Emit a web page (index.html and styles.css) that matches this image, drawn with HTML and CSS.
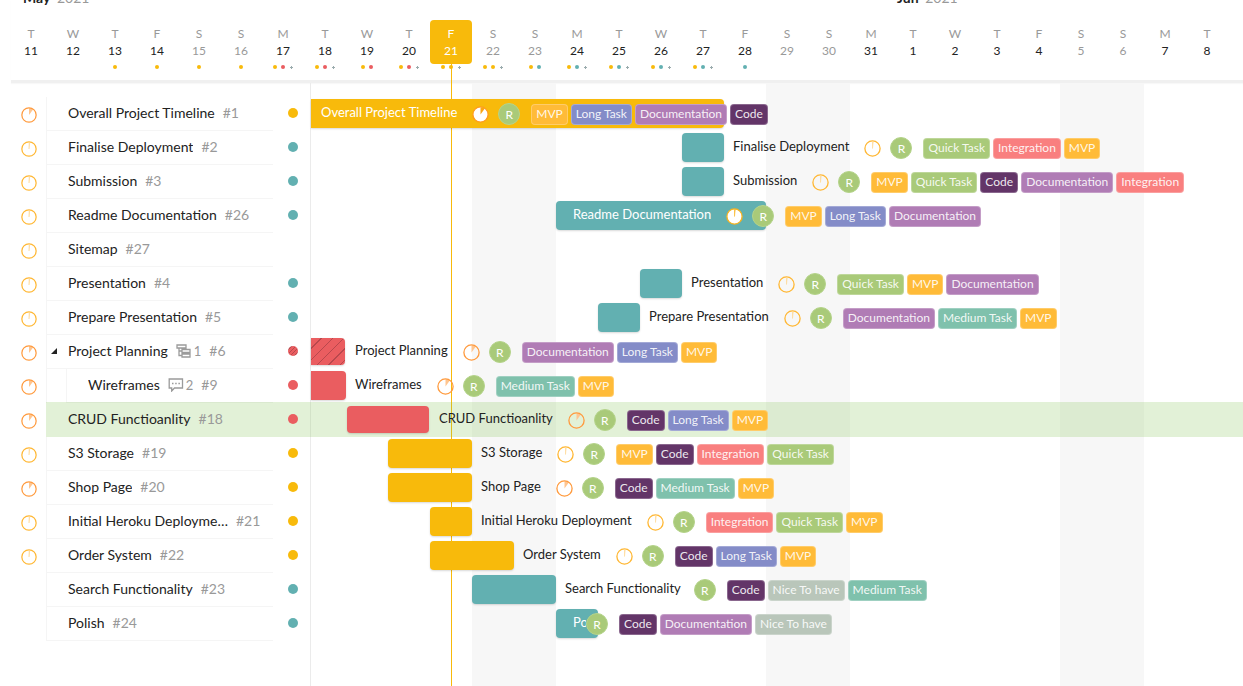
FILE: index.html
```html
<!DOCTYPE html>
<html lang="en">
<head>
<meta charset="utf-8">
<title>Project timeline</title>
<link rel="stylesheet" href="styles.css">
</head>
<body>
<svg class="sprite" aria-hidden="true">
  <symbol id="p0" viewBox="0 0 17 17"><circle cx="8.5" cy="8.5" r="7.6" fill="none" stroke="#ffb733" stroke-width="1.3"/><path d="M8.5 8.5V1.5h.8z" fill="#ffe0a6" stroke="#ffd58a" stroke-width=".5"/></symbol>
  <symbol id="p10" viewBox="0 0 17 17"><path d="M8.5 8.5V1.2a7.3 7.3 0 0 1 4.300 1.400z" fill="#ffc58f"/><circle cx="8.5" cy="8.5" r="7.6" fill="none" stroke="#ff9a3d" stroke-width="1.3"/></symbol>
  <symbol id="f0" viewBox="0 0 17 17"><circle cx="8.5" cy="8.5" r="7.6" fill="#fff" stroke="#f9b21c" stroke-width="1.3"/><path d="M8.5 8.5V1.5h.8z" fill="#f9b21c" stroke="#f9b21c" stroke-width=".5"/></symbol>
  <symbol id="f10" viewBox="0 0 17 17"><circle cx="8.5" cy="8.5" r="7.6" fill="#fff" stroke="#ff9a1f" stroke-width="1.3"/><path d="M8.5 8.5V1.2a7.3 7.3 0 0 1 4.300 1.400z" fill="#fba614"/></symbol>
  <symbol id="subtasks" viewBox="0 0 16 14"><path d="M1 1h9v3H1zM6 5.500h8v3H6zM6 10h8v3H6zM3 4v7.500h3M3 7h3" fill="none" stroke="#9b9b9b" stroke-width="1.3"/></symbol>
  <symbol id="comments" viewBox="0 0 16 14"><path d="M1.200 1h13.300v9H6.500L3.700 13v-3H1.200z" fill="none" stroke="#9b9b9b" stroke-width="1.3"/><path d="M4 5.500h1.500M7.200 5.500h1.500M10.400 5.500h1.500" stroke="#9b9b9b" stroke-width="1.300"/></symbol>
</svg>

<header class="calendar">
  <div class="months">
    <div class="month may"><b>May</b> 2021</div>
    <div class="month jun"><b>Jun</b> 2021</div>
  </div>
  <ol class="days">
    <li class="day"><span>T</span><b>11</b></li>
    <li class="day"><span>W</span><b>12</b></li>
    <li class="day"><span>T</span><b>13</b><div class="load"><i class="yellow"></i></div></li>
    <li class="day"><span>F</span><b>14</b><div class="load"><i class="yellow"></i></div></li>
    <li class="day off"><span>S</span><b>15</b><div class="load"><i class="yellow"></i></div></li>
    <li class="day off"><span>S</span><b>16</b><div class="load"><i class="yellow"></i></div></li>
    <li class="day"><span>M</span><b>17</b><div class="load"><i class="yellow"></i><i class="red"></i><i class="more"></i></div></li>
    <li class="day"><span>T</span><b>18</b><div class="load"><i class="yellow"></i><i class="red"></i><i class="more"></i></div></li>
    <li class="day"><span>W</span><b>19</b><div class="load"><i class="yellow"></i><i class="red"></i></div></li>
    <li class="day"><span>T</span><b>20</b><div class="load"><i class="yellow"></i><i class="red"></i><i class="more"></i></div></li>
    <li class="day today"><span>F</span><b>21</b><div class="load"><i class="yellow"></i><i class="yellow"></i><i class="more"></i></div></li>
    <li class="day off"><span>S</span><b>22</b><div class="load"><i class="yellow"></i><i class="yellow"></i><i class="more"></i></div></li>
    <li class="day off"><span>S</span><b>23</b><div class="load"><i class="yellow"></i><i class="teal"></i></div></li>
    <li class="day"><span>M</span><b>24</b><div class="load"><i class="yellow"></i><i class="teal"></i><i class="more"></i></div></li>
    <li class="day"><span>T</span><b>25</b><div class="load"><i class="yellow"></i><i class="teal"></i><i class="more"></i></div></li>
    <li class="day"><span>W</span><b>26</b><div class="load"><i class="yellow"></i><i class="teal"></i><i class="more"></i></div></li>
    <li class="day"><span>T</span><b>27</b><div class="load"><i class="yellow"></i><i class="teal"></i><i class="more"></i></div></li>
    <li class="day"><span>F</span><b>28</b><div class="load"><i class="teal"></i></div></li>
    <li class="day off"><span>S</span><b>29</b></li>
    <li class="day off"><span>S</span><b>30</b></li>
    <li class="day"><span>M</span><b>31</b></li>
    <li class="day"><span>T</span><b>1</b></li>
    <li class="day"><span>W</span><b>2</b></li>
    <li class="day"><span>T</span><b>3</b></li>
    <li class="day"><span>F</span><b>4</b></li>
    <li class="day off"><span>S</span><b>5</b></li>
    <li class="day off"><span>S</span><b>6</b></li>
    <li class="day"><span>M</span><b>7</b></li>
    <li class="day"><span>T</span><b>8</b></li>
  </ol>
</header>

<main class="board">
  <div class="backdrop">
    <div class="weekend first"></div>
    <div class="weekend second"></div>
    <div class="weekend third"></div>
    <div class="now"></div>
  </div>

  <div class="row">
    <div class="status"><svg class="pie"><use href="#p10"/></svg></div>
    <div class="line">
      <div class="task"><span class="name">Overall Project Timeline</span><span class="id">#1</span></div>
      <div class="flag"><i class="yellow"></i></div>
      <div class="track" style="--start:1;--end:11"><div class="bar yellow cut"></div>
        <div class="meta inside pinned"><span class="name">Overall Project Timeline</span><svg class="pie"><use href="#f10"/></svg><span class="avatar">R</span><span class="tag mvp">MVP</span><span class="tag long">Long Task</span><span class="tag doc">Documentation</span><span class="tag code">Code</span></div></div>
    </div>
  </div>

  <div class="row">
    <div class="status"><svg class="pie"><use href="#p0"/></svg></div>
    <div class="line">
      <div class="task"><span class="name">Finalise Deployment</span><span class="id">#2</span></div>
      <div class="flag"><i class="teal"></i></div>
      <div class="track" style="--start:10;--end:11"><div class="bar teal"></div>
        <div class="meta"><span class="name">Finalise Deployment</span><svg class="pie"><use href="#p0"/></svg><span class="avatar">R</span><span class="tag quick">Quick Task</span><span class="tag integration">Integration</span><span class="tag mvp">MVP</span></div></div>
    </div>
  </div>

  <div class="row">
    <div class="status"><svg class="pie"><use href="#p0"/></svg></div>
    <div class="line">
      <div class="task"><span class="name">Submission</span><span class="id">#3</span></div>
      <div class="flag"><i class="teal"></i></div>
      <div class="track" style="--start:10;--end:11"><div class="bar teal"></div>
        <div class="meta"><span class="name">Submission</span><svg class="pie"><use href="#p0"/></svg><span class="avatar">R</span><span class="tag mvp">MVP</span><span class="tag quick">Quick Task</span><span class="tag code">Code</span><span class="tag doc">Documentation</span><span class="tag integration">Integration</span></div></div>
    </div>
  </div>

  <div class="row">
    <div class="status"><svg class="pie"><use href="#p0"/></svg></div>
    <div class="line">
      <div class="task"><span class="name">Readme Documentation</span><span class="id">#26</span></div>
      <div class="flag"><i class="teal"></i></div>
      <div class="track" style="--start:7;--end:12"><div class="bar teal"></div>
        <div class="meta inside"><span class="name">Readme Documentation</span><svg class="pie"><use href="#f0"/></svg><span class="avatar">R</span><span class="tag mvp">MVP</span><span class="tag long">Long Task</span><span class="tag doc">Documentation</span></div></div>
    </div>
  </div>

  <div class="row">
    <div class="status"><svg class="pie"><use href="#p0"/></svg></div>
    <div class="line">
      <div class="task"><span class="name">Sitemap</span><span class="id">#27</span></div>
      <div class="flag"></div>
      <div class="track"></div>
    </div>
  </div>

  <div class="row">
    <div class="status"><svg class="pie"><use href="#p0"/></svg></div>
    <div class="line">
      <div class="task"><span class="name">Presentation</span><span class="id">#4</span></div>
      <div class="flag"><i class="teal"></i></div>
      <div class="track" style="--start:9;--end:10"><div class="bar teal"></div>
        <div class="meta"><span class="name">Presentation</span><svg class="pie"><use href="#p0"/></svg><span class="avatar">R</span><span class="tag quick">Quick Task</span><span class="tag mvp">MVP</span><span class="tag doc">Documentation</span></div></div>
    </div>
  </div>

  <div class="row">
    <div class="status"><svg class="pie"><use href="#p0"/></svg></div>
    <div class="line">
      <div class="task"><span class="name">Prepare Presentation</span><span class="id">#5</span></div>
      <div class="flag"><i class="teal"></i></div>
      <div class="track" style="--start:8;--end:9"><div class="bar teal"></div>
        <div class="meta"><span class="name">Prepare Presentation</span><svg class="pie"><use href="#p0"/></svg><span class="avatar">R</span><span class="tag doc">Documentation</span><span class="tag medium">Medium Task</span><span class="tag mvp">MVP</span></div></div>
    </div>
  </div>

  <div class="row">
    <div class="status"><svg class="pie"><use href="#p10"/></svg></div>
    <div class="line">
      <div class="task parent"><button class="toggle" aria-label="Collapse Project Planning"><svg viewBox="0 0 6 6"><path d="M6 0v6H0z" fill="#222"/></svg></button><span class="name">Project Planning</span><svg class="glyph"><use href="#subtasks"/></svg><span class="count">1</span><span class="id">#6</span></div>
      <div class="flag"><i class="red hatch"></i></div>
      <div class="track" style="--start:1;--end:2"><div class="bar red hatch cut inset"></div>
        <div class="meta"><span class="name">Project Planning</span><svg class="pie"><use href="#p10"/></svg><span class="avatar">R</span><span class="tag doc">Documentation</span><span class="tag long">Long Task</span><span class="tag mvp">MVP</span></div></div>
    </div>
  </div>

  <div class="row">
    <div class="status"><svg class="pie"><use href="#p10"/></svg></div>
    <div class="line">
      <div class="indent"></div>
      <div class="task child"><span class="name">Wireframes</span><svg class="glyph"><use href="#comments"/></svg><span class="count">2</span><span class="id">#9</span></div>
      <div class="flag"><i class="red"></i></div>
      <div class="track" style="--start:1;--end:2"><div class="bar red cut"></div>
        <div class="meta"><span class="name">Wireframes</span><svg class="pie"><use href="#p10"/></svg><span class="avatar">R</span><span class="tag medium">Medium Task</span><span class="tag mvp">MVP</span></div></div>
    </div>
  </div>

  <div class="row selected">
    <div class="status"><svg class="pie"><use href="#p10"/></svg></div>
    <div class="line">
      <div class="task"><span class="name">CRUD Functioanlity</span><span class="id">#18</span></div>
      <div class="flag"><i class="red"></i></div>
      <div class="track" style="--start:2;--end:4"><div class="bar red inset"></div>
        <div class="meta"><span class="name">CRUD Functioanlity</span><svg class="pie"><use href="#p10"/></svg><span class="avatar">R</span><span class="tag code">Code</span><span class="tag long">Long Task</span><span class="tag mvp">MVP</span></div></div>
    </div>
  </div>

  <div class="row">
    <div class="status"><svg class="pie"><use href="#p0"/></svg></div>
    <div class="line">
      <div class="task"><span class="name">S3 Storage</span><span class="id">#19</span></div>
      <div class="flag"><i class="yellow"></i></div>
      <div class="track" style="--start:3;--end:5"><div class="bar yellow"></div>
        <div class="meta"><span class="name">S3 Storage</span><svg class="pie"><use href="#p0"/></svg><span class="avatar">R</span><span class="tag mvp">MVP</span><span class="tag code">Code</span><span class="tag integration">Integration</span><span class="tag quick">Quick Task</span></div></div>
    </div>
  </div>

  <div class="row">
    <div class="status"><svg class="pie"><use href="#p10"/></svg></div>
    <div class="line">
      <div class="task"><span class="name">Shop Page</span><span class="id">#20</span></div>
      <div class="flag"><i class="yellow"></i></div>
      <div class="track" style="--start:3;--end:5"><div class="bar yellow"></div>
        <div class="meta"><span class="name">Shop Page</span><svg class="pie"><use href="#p10"/></svg><span class="avatar">R</span><span class="tag code">Code</span><span class="tag medium">Medium Task</span><span class="tag mvp">MVP</span></div></div>
    </div>
  </div>

  <div class="row">
    <div class="status"><svg class="pie"><use href="#p0"/></svg></div>
    <div class="line">
      <div class="task"><span class="name">Initial Heroku Deployment</span><span class="id">#21</span></div>
      <div class="flag"><i class="yellow"></i></div>
      <div class="track" style="--start:4;--end:5"><div class="bar yellow"></div>
        <div class="meta"><span class="name">Initial Heroku Deployment</span><svg class="pie"><use href="#p0"/></svg><span class="avatar">R</span><span class="tag integration">Integration</span><span class="tag quick">Quick Task</span><span class="tag mvp">MVP</span></div></div>
    </div>
  </div>

  <div class="row">
    <div class="status"><svg class="pie"><use href="#p0"/></svg></div>
    <div class="line">
      <div class="task"><span class="name">Order System</span><span class="id">#22</span></div>
      <div class="flag"><i class="yellow"></i></div>
      <div class="track" style="--start:4;--end:6"><div class="bar yellow"></div>
        <div class="meta"><span class="name">Order System</span><svg class="pie"><use href="#p0"/></svg><span class="avatar">R</span><span class="tag code">Code</span><span class="tag long">Long Task</span><span class="tag mvp">MVP</span></div></div>
    </div>
  </div>

  <div class="row">
    <div class="status"></div>
    <div class="line">
      <div class="task"><span class="name">Search Functionality</span><span class="id">#23</span></div>
      <div class="flag"><i class="teal"></i></div>
      <div class="track" style="--start:5;--end:7"><div class="bar teal"></div>
        <div class="meta"><span class="name">Search Functionality</span><span class="avatar">R</span><span class="tag code">Code</span><span class="tag nice">Nice To have</span><span class="tag medium">Medium Task</span></div></div>
    </div>
  </div>

  <div class="row">
    <div class="status"></div>
    <div class="line">
      <div class="task"><span class="name">Polish</span><span class="id">#24</span></div>
      <div class="flag"><i class="teal"></i></div>
      <div class="track" style="--start:7;--end:8"><div class="bar teal"></div>
        <div class="meta inside tight"><span class="name">Polish</span><span class="avatar">R</span><span class="tag code">Code</span><span class="tag doc">Documentation</span><span class="tag nice">Nice To have</span></div></div>
    </div>
  </div>
</main>
</body>
</html>
```

FILE: styles.css
```css
:root {
  --day: 42px;
  --yellow: #f8ba0b;
  --teal: #62b0b1;
  --red: #ea5d60;
}

* { box-sizing: border-box; }

body {
  margin: 0;
  min-height: 100vh;
  display: flex;
  flex-direction: column;
  overflow-x: hidden;
  font-family: Lato, "Liberation Sans", sans-serif;
  font-size: 14px;
  line-height: 20px;
  color: #222;
  background: #fff;
}

.sprite { display: none; }

/* Calendar header */
.calendar {
  height: 83px;
  margin-left: 11px;
  border-bottom: 3px solid #f0f0f0;
  box-shadow: 0 1px 1px #f8f8f8;
}

.months, .days {
  display: grid;
  grid-template-columns: repeat(29, var(--day));
  margin: 0 0 0 -1px;
  padding: 0;
  list-style: none;
}

.months { margin-top: -12px; height: 32px; }
.month { white-space: nowrap; color: #999; }
.month b { margin-right: 3px; color: #222; }
.may { grid-column: 1 / 22; padding-left: 13px; }
.jun { grid-column: 22 / -1; padding-left: 5px; }

.day {
  height: 44px;
  padding-top: 5px;
  border-radius: 4px;
  text-align: center;
  font-size: 12px;
  line-height: 17px;
}

.day span { display: block; color: #999; }
.day b { display: block; font-weight: 400; }
.day.off b { color: #999; }
.day.today { position: relative; color: #fff; background: var(--yellow); }
.day.today b, .day.today span { color: #fff; }

.day.today::after {
  content: "";
  position: absolute;
  top: 44px;
  left: 21px;
  width: 1px;
  height: 19px;
  background: var(--yellow);
}

.load {
  display: flex;
  justify-content: center;
  gap: 4px;
  padding-top: 6px;
}

.load i { width: 4px; height: 4px; border-radius: 50%; }

.load .more {
  width: 3px;
  height: 3px;
  margin: 1px 0 0 1px;
  border-radius: 0;
  background:
    linear-gradient(#9aabad, #9aabad) 50% 50% / 3px 1px no-repeat,
    linear-gradient(#9aabad, #9aabad) 50% 50% / 1px 3px no-repeat;
}

.yellow { background-color: var(--yellow); }
.teal { background-color: var(--teal); }
.red { background-color: var(--red); }

/* Board */
.board {
  position: relative;
  flex: 1;
  padding-top: 14px;
  overflow: hidden;
}

.backdrop, .track {
  display: grid;
  grid-template-columns: 35px repeat(20, var(--day)) minmax(0, 1fr);
}

.backdrop {
  position: absolute;
  inset: 0 0 0 310px;
  border-left: 1px solid #ebebeb;
}

.weekend { grid-row: 1; background: #f7f7f7; }
.first { grid-column: 5 / 7; }
.second { grid-column: 12 / 14; }
.third { grid-column: 19 / 21; }
.now { grid-row: 1; grid-column: 4; justify-self: center; width: 1px; background: var(--yellow); }

.row {
  position: relative;
  display: flex;
  height: 34px;
}

.status {
  flex: none;
  width: 46px;
  padding: 10px 0 0 21px;
}

.pie { display: block; flex: none; width: 17px; height: 17px; }
.status .pie { width: 16px; height: 16px; }

.line { flex: 1; min-width: 0; display: flex; }

.selected .line {
  background: rgba(140, 199, 94, .25);
  box-shadow: 0 -1px 0 rgba(140, 199, 94, .25);
}

.task {
  flex: none;
  display: flex;
  align-items: center;
  width: 227px;
  padding: 0 8px 2px 21px;
  border: solid #f5f5f5;
  border-width: 0 0 1px 1px;
}

.selected .task { border-color: transparent; }
.task .name { max-width: 160px; overflow: hidden; text-overflow: ellipsis; white-space: nowrap; }
.id { margin-left: 8px; padding-top: 1px; color: #999; }
.parent { padding-left: 4px; }
.indent { width: 20px; border-left: 1px solid #f5f5f5; }
.child { width: 207px; }

.toggle {
  display: flex;
  width: 17px;
  padding: 0;
  border: 0;
  background: none;
}

.toggle svg { width: 6px; height: 6px; }
.glyph { width: 16px; height: 14px; margin-left: 8px; }
.count { margin-left: 2px; padding-top: 1px; font-size: 13px; color: #999; }

.flag { flex: none; width: 38px; padding: 11px 0 0 15px; }
.flag i { display: block; width: 10px; height: 10px; border-radius: 50%; }

.track { flex: 1; min-width: 0; align-items: center; }

.bar {
  grid-row: 1;
  grid-column: var(--start) / var(--end);
  align-self: start;
  height: 29px;
  margin-top: 2px;
  border-radius: 4px;
  box-shadow: 0 1px 2px rgba(0, 0, 0, .15);
}

.cut { border-top-left-radius: 0; border-bottom-left-radius: 0; }
.inset { height: 27px; margin: 3px 1px 0; }
.inset.cut { margin-left: 0; }

.hatch {
  background-image: repeating-linear-gradient(135deg, transparent 0 7px, #b9484d 7px 8px);
}

.flag .hatch {
  background-image: repeating-linear-gradient(135deg, transparent 0 2px, #b9484d 2px 3px);
}

.meta {
  grid-row: 1;
  grid-column: var(--end) / -1;
  display: flex;
  align-items: center;
  padding-left: 9px;
  white-space: nowrap;
}

.meta .name { padding-bottom: 4px; font-size: 13px; }
.meta .pie { margin-left: 15px; }
.inside { grid-column: var(--start) / -1; padding-left: 17px; }
.inside .name { color: #fff; }
.pinned { padding-left: 10px; }
.tight .name { width: 13px; overflow: hidden; }

.avatar {
  flex: none;
  width: 22px;
  height: 22px;
  margin: 0 8px 0 13px;
  border: 1px solid #b5d48b;
  border-radius: 50%;
  background: #a9ca79;
  color: #fff;
  font-size: 12px;
  line-height: 21px;
  text-align: center;
}

.pie + .avatar { margin-left: 9px; }
.tight .avatar { margin-left: 0; }

.tag {
  flex: none;
  height: 21px;
  margin-left: 3px;
  padding: 0 4px;
  border: 1px solid rgba(255, 255, 255, .25);
  border-radius: 4px;
  color: rgba(255, 255, 255, .9);
  font-size: 12px;
  line-height: 18px;
}

.mvp { background: #ffbb38; }
.long { background: #848cc8; }
.doc { background: #b07cb5; }
.code { background: #633568; }
.quick { background: #a9ca79; }
.integration { background: #f97f7f; }
.medium { background: #7fc1ac; }
.nice { background: #b9c6ba; }
```
